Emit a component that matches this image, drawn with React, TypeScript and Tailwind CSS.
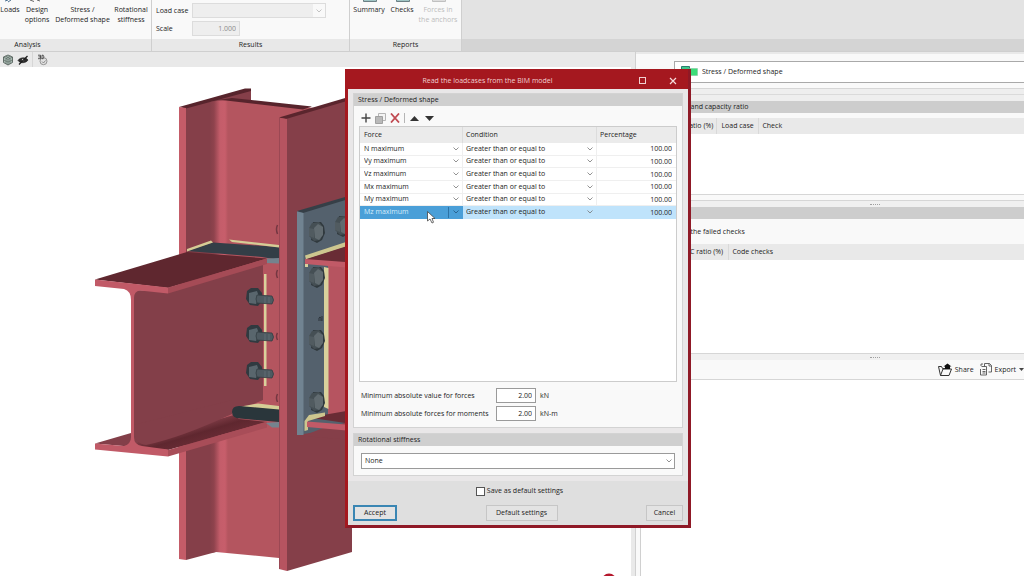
import type { ReactNode } from 'react';
import clsx from 'clsx';

const forces = [
  'N maximum',
  'Vy maximum',
  'Vz maximum',
  'Mx maximum',
  'My maximum',
  'Mz maximum',
];

const analysisItems = [
  { lines: ['Loads'], width: 'w-5' },
  { lines: ['Design', 'options'], width: 'w-[34px]' },
  { lines: ['Stress /', 'Deformed shape'], width: 'w-[57px]' },
  { lines: ['Rotational', 'stiffness'], width: 'w-10' },
];

const reportItems = [
  { lines: ['Summary'], width: 'w-9', disabled: false },
  { lines: ['Checks'], width: 'w-[30px]', disabled: false },
  { lines: ['Forces in', 'the anchors'], width: 'w-[42px]', disabled: true },
];

const headBolts = [
  [317, 232],
  [343, 226],
  [317, 277],
  [317, 340],
  [317, 402],
];

const nutBolts = [298, 335, 372];

function Chevron({ className }: { className?: string }) {
  return (
    <svg viewBox="0 0 6 4" className={clsx('pointer-events-none h-1 w-1.5 flex-none', className)}>
      <path d="M0.5 0.5L3 3L5.5 0.5" fill="none" stroke="currentColor" strokeWidth="0.8" />
    </svg>
  );
}

function RibbonGroup({ title, className, children }: { title: string; className: string; children: ReactNode }) {
  return (
    <section className={clsx('flex flex-none flex-col border-r border-[#cfcfcf]', className)}>
      <div className="flex-1 bg-[#f9f9f9]">{children}</div>
      <h2 className="h-3 bg-[#e8e8e8] text-center leading-3">{title}</h2>
    </section>
  );
}

function RibbonButton({ lines, width, disabled }: { lines: string[]; width: string; disabled?: boolean }) {
  return (
    <button
      type="button"
      disabled={disabled}
      className={clsx('flex flex-none flex-col items-center whitespace-nowrap leading-[10px]', width, disabled && 'text-[#bcbcbc]')}
    >
      {lines.map((line) => (
        <span key={line}>{line}</span>
      ))}
    </button>
  );
}

function Ribbon() {
  return (
    <header className="flex h-[52px] flex-none border-b border-[#cfcfcf] bg-[#e3e3e3]">
      <RibbonGroup title="Analysis" className="w-[152px] [&>h2]:pr-24">
        <svg viewBox="0 0 152 5" className="block h-[5px] w-[152px]">
          <path d="M5 1l3 -1M8 2l3 -2" stroke="#4b6f8f" fill="none" />
          <path d="M30 0l4 1.500M37 0l3 1" stroke="#6a6a6a" fill="none" />
        </svg>
        <div className="flex">
          {analysisItems.map((item) => (
            <RibbonButton key={item.lines[0]} {...item} />
          ))}
        </div>
      </RibbonGroup>

      <RibbonGroup title="Results" className="w-[198px]">
        <div className="flex flex-col gap-[3px] pl-1 pt-[3px]">
          <div className="flex items-center">
            <label htmlFor="load-case" className="w-9">Load case</label>
            <span className="flex h-[15px] w-[134px] items-center border border-[#dcdcdc] bg-[#eeeeee]">
              <select id="load-case" disabled className="h-full min-w-0 flex-1 appearance-none" />
              <span className="flex h-full w-3 items-center justify-center bg-[#f9f9f9]">
                <Chevron className="text-[#b5b5b5]" />
              </span>
            </span>
          </div>
          <div className="flex items-center">
            <label htmlFor="scale" className="w-9">Scale</label>
            <input
              id="scale"
              disabled
              defaultValue="1.000"
              className="h-[15px] w-12 border border-[#dcdcdc] bg-[#eeeeee] pr-[3px] text-right text-[#8c8c8c]"
            />
          </div>
        </div>
      </RibbonGroup>

      <RibbonGroup title="Reports" className="w-28">
        <svg viewBox="0 0 112 5" className="block h-[5px] w-28">
          <path d="M13.500 0v1.500h13V0M46.500 0v1.500h13V0" stroke="#6c7f84" fill="#9fc4c4" />
          <path d="M82.500 0v1.500h13V0" stroke="#c0c0c0" fill="#dddddd" />
        </svg>
        <div className="flex pl-px">
          {reportItems.map((item) => (
            <RibbonButton key={item.lines[0]} {...item} />
          ))}
        </div>
      </RibbonGroup>

      <div className="flex flex-1 flex-col justify-end">
        <div className="h-3 bg-[#d4d4d4]" />
      </div>
    </header>
  );
}

function ViewToolbar() {
  return (
    <div className="flex h-[15px] flex-none items-center bg-[#e9e9e9] pl-0.5">
      <button type="button" aria-label="View cube">
        <svg viewBox="0 0 12 12" className="h-3 w-3">
          <path d="M6 1l4.500 2v5.500L6 11L1.500 8.500V3z" fill="#a9bab3" stroke="#4a5651" strokeWidth="0.8" />
          <path d="M1.500 3L6 5.500L10.500 3M6 5.500V11M3.500 2l4.500 2.500v5.500M8.500 2L4 4.500v5.500M1.500 6L6 8l4.500 -2" fill="none" stroke="#4a5651" strokeWidth="0.5" />
        </svg>
      </button>
      <button type="button" aria-label="Hide" className="ml-[3px]">
        <svg viewBox="0 0 12 12" className="h-3 w-3">
          <path d="M1 6.500C3 3 9 3 11 6C9 9.500 3 9.500 1 6.500z" fill="#2c2c2c" stroke="#1d1d1d" strokeWidth="0.6" />
          <circle cx="6" cy="6" r="1.200" fill="#d8d8d8" />
          <path d="M2 10.500L10.500 2" stroke="#1d1d1d" strokeWidth="1.200" />
        </svg>
      </button>
      <span className="ml-[3px] h-[15px] w-px bg-[#d6d6d6]" />
      <button type="button" aria-label="3D rotation" className="ml-1">
        <svg viewBox="0 0 12 12" className="h-3 w-3">
          <circle cx="6.500" cy="7.200" r="3.500" fill="#e2e2e2" stroke="#8a8a8a" strokeWidth="0.9" />
          <path d="M1 1.200h2.500v3.500H1M1.500 2.900h2M5 1.200h1.200q1.500 1.700 0 3.500H5z" fill="#e9e9e9" stroke="#333333" strokeWidth="0.8" />
          <path d="M5 7.500l1.500 1.500l2 -2.500" fill="none" stroke="#666666" strokeWidth="0.7" />
        </svg>
      </button>
    </div>
  );
}

function JointModel() {
  return (
    <svg viewBox="0 67 635 509" className="block h-[509px] w-[635px] max-w-none" role="img" aria-label="Steel joint">
      <defs>
        <linearGradient id="web" gradientUnits="userSpaceOnUse" x1="210" y1="0" x2="230" y2="0">
          <stop offset="0" stopColor="#853f49" />
          <stop offset="0.2" stopColor="#8f434d" />
          <stop offset="0.5" stopColor="#c45d6a" />
          <stop offset="0.75" stopColor="#c75e6b" />
          <stop offset="0.9" stopColor="#b4555f" />
        </linearGradient>
        <linearGradient id="flangeTop" gradientUnits="userSpaceOnUse" x1="190" y1="425" x2="196" y2="445">
          <stop offset="0" stopColor="#833f49" />
          <stop offset="0.5" stopColor="#5f272f" />
          <stop offset="1" stopColor="#692c35" />
        </linearGradient>
      </defs>

      {/* column: rear flange and web */}
      <path d="M186 107L251 89V110L216 120V552L186 560z" fill="#853f49" />
      <path d="M179 107L245 88.500L251 88.500V91L186 108.500z" fill="#57242c" />
      <path d="M210 102L226 99.500L315 108V300H279V558L216 552L210 553z" fill="url(#web)" />
      <path d="M218 100L232 98L312 106.500L303 109.500L226 100.500z" fill="#57242c" />
      <path d="M179 107L186 108V560L179 559z" fill="#c45c68" />

      {/* upper stiffener */}
      <path d="M187 251L213 242.500L279 247V260L262 257z" fill="#333e47" />
      <path d="M187 249L211 240.500L213 242.500L187 251.500zM229 239.500L279 245V247.500L232 242z" fill="#d5cd96" />
      <path d="M266 258.500L279 258V263.500L267 263z" fill="#74838e" />

      {/* left beam */}
      <path d="M134 290L168 291L263 262V400L150 447H134z" fill="#833f49" />
      <path d="M95 443.500L131 433L134 445L140 441L234 415L239 419L267 422L168 450z" fill="url(#flangeTop)" />
      <path d="M134 430Q135 444 146 445Q180 438 232 414V400L134 425z" fill="#833f49" />
      <path d="M95 279.500L187 252L267 258.500L168 288z" fill="#5f272f" />
      <path d="M168 287.500L267 258.500V264L168 293.500z" fill="#a54b56" />
      <path d="M95 279.500L168 287.500V293.500L140 290.500Q134 291 134 298V437Q134 445 142 446L168 449.500V456.500L95 449.500V443.500L124 446Q131 444 131 437V300Q131 291 124 289L95 286z" fill="#c15a67" />
      <path d="M168 450L267 421.500V427.500L168 456.500z" fill="#a84d58" />
      <path d="M264 274H266.500V386H264z" fill="#d9d19c" />
      <path d="M277.500 225q-2 4 0 9M277.500 270q-2 4 0 8M277.500 333q-2 3 0 7M277.500 394q-2 4 0 8" fill="none" stroke="#743742" strokeWidth="1.500" />

      {/* lower stiffener */}
      <path d="M241 406.500L258 403.500L279 406V410.500z" fill="#d5cd96" />
      <path d="M239 406L279 409.500V422L240 418.500Q232 418 232 412Q232 406 239 406z" fill="#2a363b" />
      <path d="M266 423L279 422V427.500H272z" fill="#74838e" />

      {/* column: front flange */}
      <path d="M287 118L352 98V552L287 571z" fill="#853f49" />
      <path d="M279 117.500L352 96V99.500L286 119z" fill="#5a252d" />
      <path d="M279 118L287 119V571L279 569z" fill="#b65460" />
      <path d="M279.500 118V569" stroke="#944552" strokeWidth="0.8" />

      {/* end plate */}
      <path d="M297 211.500L352 195.500V420L323 431L297 435z" fill="#54616d" />
      <path d="M297 211L352 195V198L303 213z" fill="#363f47" />
      <path d="M297 211.500L303.500 213V435L297 435z" fill="#718391" />

      {/* right beam */}
      <path d="M328 264H352V416H328z" fill="#b65460" />
      <path d="M323 428L352 426V440L303 436z" fill="#853f49" />
      <path d="M305 255.500L352 240V245L306 259.500z" fill="#cdc68f" />
      <path d="M305 259.500L352 244.500V263z" fill="#692c35" />
      <path d="M305 259L352 262.500V268L305 264z" fill="#c15a67" />
      <path d="M305 264h3v3h-3zM324 267L328.500 268V409L324 407z" fill="#d9d19c" />
      <path d="M309 417.500L352 410V424z" fill="#692c35" />
      <path d="M304.500 421L309 415L325 412.500V416L308 421V430L304.500 431z" fill="#cdc68f" />
      <path d="M307 421.500L352 425V431L307 427z" fill="#c15a67" />
      <path d="M319 321v-3q2 -3 2 3M322 321v-5" fill="none" stroke="#2b333a" />

      {headBolts.map(([x, y]) => (
        <g key={`${x}-${y}`}>
          <path d={`M${x - 4} ${y - 10}h8l3 4l1 7l-3 7l-5 3l-6 -3z`} fill="#30393e" />
          <path d={`M${x - 8} ${y - 4}l3 -5l7 -1l4 5v7l-3 6l-6 1l-5 -5z`} fill="#454f54" />
          <path d={`M${x - 3} ${y - 4}l4 -4l5 3v8l-4 5l-4 -2z`} fill="#616b70" />
          <path d={`M${x - 8} ${y - 4}l5 1v9l-5 -2z`} fill="#515b60" />
        </g>
      ))}

      {nutBolts.map((y) => (
        <g key={y}>
          <path d={`M${247} ${y - 7}l4 -3h7l4 5v8l-4 5l-8 -1l-4 -6z`} fill="#303a40" />
          <path d={`M249 ${y - 5}l8 -2l2 6l-3 7l-7 -1z`} fill="#59666d" />
          <path d={`M257 ${y - 3}l15 1q3 4 0 8l-15 -1q-2 -4 0 -8z`} fill="#4e5a61" stroke="#333d43" strokeWidth="0.8" />
          <path d={`M269 ${y - 1}v6M265 ${y - 1}v6`} stroke="#667178" strokeWidth="0.8" />
        </g>
      ))}

      <circle cx="609" cy="581" r="7.500" fill="#b5182d" />
    </svg>
  );
}

function SectionTitle({ children }: { children?: ReactNode }) {
  return <h3 className="h-3 flex-none bg-[#cdcdcd] pl-7 leading-3">{children}</h3>;
}

function Grip() {
  return (
    <div className="flex h-[7px] flex-none items-center justify-center border-t border-[#d6d6d6] bg-[#f0f0f0] pl-[86px]">
      <span className="w-2.5 border-t border-dotted border-[#a0a0a0]" />
    </div>
  );
}

function ResultsPanel() {
  return (
    <aside className="flex w-[38%] flex-none flex-col border-l border-[#d0d0d0] bg-[#f9f9f9]">
      <div className="flex h-[37px] flex-none items-center border-b border-t-2 border-b-[#d6d6d6] border-t-[#e9e9e9] pl-[5px] pt-px">
        <label htmlFor="result-case" className="w-[33px]">Load case</label>
        <div className="flex h-[22px] flex-1 items-center gap-1 border border-r-0 border-[#a9a9a9] bg-white pl-1.5">
          <svg viewBox="0 0 17 12" className="h-3 w-[17px]">
            <path d="M0.500 0.500h8v9h-8z" fill="#3fc98b" stroke="#2a7f70" />
            <path d="M8 2.500h8.500v7H8z" fill="#3ddc78" stroke="#7bbf9a" strokeWidth="0.5" />
          </svg>
          <select id="result-case" className="flex-1 appearance-none">
            <option>Stress / Deformed shape</option>
          </select>
        </div>
      </div>
      <div className="ml-1 flex flex-1 flex-col border-l border-[#d0d0d0] bg-white">
        <div className="h-3 flex-none bg-[#eeeeee] pt-[5px]">
          <div className="border-t border-[#dadada]" />
        </div>
        <SectionTitle>Stress and capacity ratio</SectionTitle>
        <div className="h-[82px] flex-none border-b border-t-[5px] border-b-[#d6d6d6] border-t-[#f9f9f9]">
          <table className="w-full bg-[#e9e9e9]">
            <thead>
              <tr className="h-4 text-left">
                <th className="w-[76px] border-r border-[#d9d9d9] pl-11 font-normal">Ratio (%)</th>
                <th className="w-[42px] border-r border-[#d9d9d9] pl-1 font-normal">Load case</th>
                <th className="pl-[3px] font-normal">Check</th>
              </tr>
            </thead>
          </table>
        </div>
        <div className="h-[5px] flex-none bg-[#f9f9f9]" />
        <Grip />
        <SectionTitle />
        <p className="h-[25px] flex-none bg-[#f9f9f9] pl-[30px] leading-[25px]">Show the failed checks</p>
        <div className="h-[109px] flex-none">
          <table className="w-full bg-[#e9e9e9]">
            <thead>
              <tr className="h-4 text-left">
                <th className="w-[88px] border-r border-[#d9d9d9] pl-11 font-normal">UC ratio (%)</th>
                <th className="pl-[3px] font-normal">Code checks</th>
              </tr>
            </thead>
          </table>
        </div>
        <Grip />
        <div className="flex h-5 flex-none items-center justify-end border-b border-[#d6d6d6] bg-[#f9f9f9]">
          <button type="button" className="flex items-center gap-[3px]">
            <svg viewBox="0 0 14 13" className="h-[13px] w-3.5">
              <path d="M0.500 3.500h3l1 2h3M0.500 3.500l2 9h8.500l2.500 -6.500H5l-2.500 6.500" fill="none" stroke="#333333" />
              <path d="M9.500 0.500l4 3h-1.500v2.500H7V3.500H5.500z" fill="#111111" />
            </svg>
            Share
          </button>
          <button type="button" className="ml-1.5 flex items-center gap-[3px]">
            <svg viewBox="0 0 12 13" className="h-[13px] w-3">
              <path d="M4.500 0.500h5l2 2v6.500h-3M1.500 3.500h5v8.500h-6V6M4.500 0.500v3M9 0.500v2.500h2.500M2.500 6.500h3M2.500 8.500h3M2.500 10h3M1 3V1h2" fill="none" stroke="#555555" strokeWidth="0.9" />
            </svg>
            Export
            <svg viewBox="0 0 5 3" className="h-[3px] w-[5px]">
              <path d="M0 0h5L2.500 3z" fill="#444444" />
            </svg>
          </button>
        </div>
      </div>
    </aside>
  );
}

function ForceTable() {
  return (
    <div className="h-64 border border-[#cccccc] bg-white">
      <table className="h-[92px] w-full table-fixed border-separate border-spacing-0">
        <thead>
          <tr className="h-4 bg-[#ebebeb] text-left">
            <th className="w-[103px] border-r border-[#dcdcdc] pl-1 font-normal">Force</th>
            <th className="w-[134px] border-r border-[#dcdcdc] pl-[3px] font-normal">Condition</th>
            <th className="pl-[3px] font-normal">Percentage</th>
          </tr>
        </thead>
        <tbody>
          {forces.map((force) => {
            const selected = force === 'Mz maximum';
            return (
              <tr key={force} className={clsx(selected && 'bg-[#bfe3fb]')}>
                <td className={clsx('border-b border-r p-0', selected ? 'border-[#4a9fd8] bg-[#4a9fd8] text-[#d5ecfb]' : 'border-[#efefef]')}>
                  <div className="flex h-[11px] items-center pr-[3px]">
                    <select aria-label="Force" defaultValue={force} className="min-w-0 flex-1 appearance-none pl-1">
                      {forces.map((name) => (
                        <option key={name}>{name}</option>
                      ))}
                    </select>
                    <span className={clsx('flex h-full items-center pl-1', selected && 'border-l border-[#2c72a5]')}>
                      <Chevron className={selected ? 'text-[#22567d]' : 'text-[#777777]'} />
                    </span>
                  </div>
                </td>
                <td className={clsx('border-b border-r p-0', selected ? 'border-[#bfe3fb]' : 'border-[#efefef]')}>
                  <div className="flex h-[11px] items-center pr-[3px]">
                    <select aria-label="Condition" className="min-w-0 flex-1 appearance-none pl-[3px]">
                      <option>Greater than or equal to</option>
                    </select>
                    <Chevron className="text-[#777777]" />
                  </div>
                </td>
                <td className={clsx('border-b p-0', selected ? 'border-[#bfe3fb]' : 'border-[#efefef]')}>
                  <input aria-label="Percentage" defaultValue="100.00" className="block h-[11px] w-full pr-1 text-right" />
                </td>
              </tr>
            );
          })}
        </tbody>
      </table>
    </div>
  );
}

function DialogGroup({ title, children }: { title: string; children: ReactNode }) {
  return (
    <section className="border border-[#d3d3d3] bg-[#f9f9f9]">
      <h3 className="h-3 bg-[#cfcfcf] pl-1 leading-3">{title}</h3>
      {children}
    </section>
  );
}

function LimitField({ id, label, unit }: { id: string; label: string; unit: string }) {
  return (
    <div className="flex items-center">
      <label htmlFor={id} className="w-[135px] whitespace-nowrap">{label}</label>
      <input id={id} defaultValue="2.00" className="h-[15px] w-10 border border-[#9a9a9a] bg-white pr-[3px] text-right" />
      <span className="ml-1">{unit}</span>
    </div>
  );
}

function LoadcaseDialog() {
  return (
    <div
      role="dialog"
      aria-labelledby="dialog-title"
      className="absolute left-[345px] top-[69px] w-[346px] border-[3px] border-t-0 border-[#a5181f] border-b-[#8f1926] border-r-[#8f1926] bg-[#e9e7e8]"
    >
      <div className="flex h-5 items-center bg-[#a5181f] text-[#f1cfd0]">
        <h2 id="dialog-title" className="flex-1 pr-3 pt-[3px] text-center">Read the loadcases from the BIM model</h2>
        <div className="flex items-center gap-[23px] pr-[11px] pt-[3px]">
          <button type="button" aria-label="Maximize" className="block h-[7px] w-[7px] border border-[#f1cfd0]" />
          <button type="button" aria-label="Close">
            <svg viewBox="0 0 8 8" className="block h-2 w-2">
              <path d="M1 1l6 6M7 1L1 7" stroke="#f6dcdc" strokeWidth="1.200" />
            </svg>
          </button>
        </div>
      </div>

      <div className="flex flex-col gap-[5px] px-[5px] pb-[5px] pt-1">
        <DialogGroup title="Stress / Deformed shape">
          <div className="flex h-5 items-center pl-[7px] pt-1">
            <button type="button" aria-label="Add">
              <svg viewBox="0 0 10 10" className="block h-2.5 w-2.5">
                <path d="M5 0.500v9M0.500 5h9" stroke="#444444" strokeWidth="1.400" />
              </svg>
            </button>
            <button type="button" aria-label="Duplicate" className="ml-1">
              <svg viewBox="0 0 11 11" className="block h-[11px] w-[11px]">
                <path d="M3.500 0.500h7v7h-7z" fill="#f4f4f4" stroke="#b5b5b5" />
                <path d="M0.500 3.500h7v7h-7z" fill="#b9b9b9" stroke="#a0a0a0" />
              </svg>
            </button>
            <button type="button" aria-label="Delete" className="ml-1">
              <svg viewBox="0 0 10 10" className="block h-2.5 w-2.5">
                <path d="M1 0.500l8 9M9 0.500l-8 9" stroke="#c04a52" strokeWidth="1.800" />
              </svg>
            </button>
            <span className="mx-1 h-2.5 w-px bg-[#b5b5b5]" />
            <button type="button" aria-label="Move up" className="ml-px">
              <svg viewBox="0 0 9 5" className="block h-[5px] w-[9px]">
                <path d="M4.500 0L9 5H0z" fill="#333333" />
              </svg>
            </button>
            <button type="button" aria-label="Move down" className="ml-1.5">
              <svg viewBox="0 0 9 5" className="block h-[5px] w-[9px]">
                <path d="M4.500 5L9 0H0z" fill="#333333" />
              </svg>
            </button>
          </div>
          <div className="px-[5px]">
            <ForceTable />
          </div>
          <div className="flex flex-col gap-[3px] py-1.5 pl-[7px]">
            <LimitField id="min-force" label="Minimum absolute value for forces" unit="kN" />
            <LimitField id="min-moment" label="Minimum absolute forces for moments" unit="kN-m" />
          </div>
        </DialogGroup>

        <DialogGroup title="Rotational stiffness">
          <div className="px-[7px] pb-1.5 pt-[7px]">
            <span className="flex h-4 items-center border border-[#9a9a9a] bg-white pr-0.5">
              <select aria-label="Rotational stiffness" className="min-w-0 flex-1 appearance-none pl-[3px]">
                <option>None</option>
              </select>
              <Chevron className="text-[#777777]" />
            </span>
          </div>
        </DialogGroup>
      </div>

      <div className="flex flex-col gap-2 bg-[#dfdfdf] px-[5px] py-1">
        <label className="flex h-3 items-center justify-center gap-0.5 pl-[3px]">
          <input type="checkbox" className="h-[9px] w-[9px] appearance-none border border-[#555555] bg-white" />
          Save as default settings
        </label>
        <div className="flex h-4 items-stretch justify-between">
          <button type="button" className="w-11 border-2 border-[#3a86b3] bg-[#e3e3e3]">Accept</button>
          <button type="button" className="w-[72px] border border-[#c6c6c6] bg-[#e3e3e3]">Default settings</button>
          <button type="button" className="w-[37px] border border-[#c6c6c6] bg-[#e3e3e3]">Cancel</button>
        </div>
      </div>

      {/* mouse pointer */}
      <svg viewBox="0 0 9 13" className="absolute left-[79px] top-[142px] h-[13px] w-[9px]">
        <path d="M0.500 0.500V10L3 8l2 4l1.500 -0.700L5 7.500h3z" fill="#ffffff" stroke="#444444" strokeWidth="0.8" />
      </svg>
    </div>
  );
}

export default function App() {
  return (
    <div className="relative flex h-screen flex-col overflow-hidden bg-white font-['Open_Sans',sans-serif] text-[7px] leading-[10px] text-[#1c1c1c]">
      <Ribbon />
      <main className="flex min-h-0 flex-1">
        <div className="flex min-w-0 flex-1 flex-col">
          <ViewToolbar />
          <div className="min-h-0 flex-1 overflow-hidden border-r-4 border-[#e9e9e9]">
            <JointModel />
          </div>
        </div>
        <ResultsPanel />
      </main>
      <LoadcaseDialog />
    </div>
  );
}
